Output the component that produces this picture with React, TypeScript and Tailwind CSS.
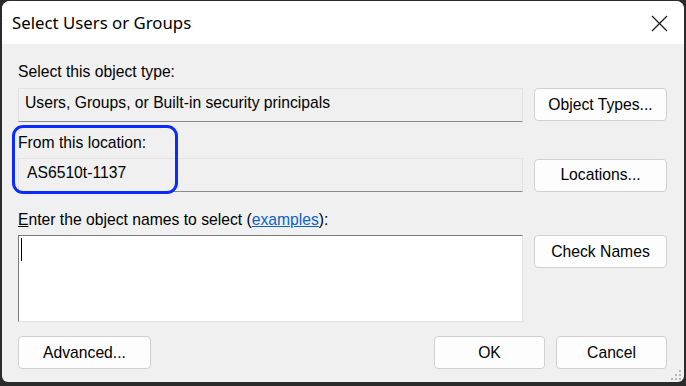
import React from "react";

const ui = { fontFamily: '"Liberation Sans", Arial, sans-serif' };
const title = { fontFamily: '"Noto Sans", "Open Sans", sans-serif' };

function WinButton({ label, className = "" }: { label: string; className?: string }) {
  return (
    <button
      className={`h-[33px] rounded-[4px] border border-[#d0d0d0] bg-[#fdfdfd] text-[15.7px] text-black ${className}`}
      style={ui}
    >
      {label}
    </button>
  );
}

function ReadOnlyField({ value, pad = "pl-[6px]" }: { value: string; pad?: string }) {
  return (
    <div className={`h-[34px] flex items-center pb-[4px] border border-[#e3e3e3] border-b-[#8a8a8a] bg-[#f0f0f0] text-[15.7px] text-black ${pad}`}>
      {value}
    </div>
  );
}

export default function App() {
  return (
    <div className="w-[686px] h-[386px] bg-[#2b2b2b] pt-px pl-[2px] pr-[2px] pb-[4px]" style={ui}>
      <div className="relative h-full rounded-t-[8px] rounded-b-[6px] overflow-hidden flex flex-col bg-[#f0f0f0]">
        {/* title bar */}
        <div className="h-[43px] shrink-0 bg-white flex items-center justify-between pl-[10px] pr-[16px]">
          <span className="text-[16.8px] text-black" style={title}>Select Users or Groups</span>
          <svg width="17" height="17" viewBox="0 0 17 17" className="mt-[1px]">
            <path d="M1 1 L16 16 M16 1 L1 16" stroke="#1a1a1a" strokeWidth="1.3" fill="none" />
          </svg>
        </div>

        {/* body */}
        <div className="flex-1 pl-[16px] pr-[17px] pt-[17px]">
          <div className="text-[15.7px] leading-[22px] text-black">Select this object type:</div>
          <div className="mt-[5px] grid grid-cols-[505px_133px] gap-x-[11px] items-start">
            <ReadOnlyField value="Users, Groups, or Built-in security principals" />
            <WinButton label="Object Types..." />
          </div>

          <div className="mt-[10px] text-[15.7px] leading-[22px] text-black">From this location:</div>
          <div className="mt-[4px] grid grid-cols-[505px_133px] gap-x-[11px] items-center">
            <ReadOnlyField value="AS6510t-1137" pad="pl-[8px]" />
            <WinButton label="Locations..." />
          </div>

          <div className="mt-[17px] text-[15.7px] leading-[22px] text-black">
            <span className="underline">E</span>nter the object names to select (
            <span className="text-[#0b62c4] underline">examples</span>):
          </div>
          <div className="mt-[4px] grid grid-cols-[505px_133px] gap-x-[11px] items-start">
            <div className="h-[87px] bg-white border border-[#e3e3e3] border-t-[#7a7a7a] border-l-[#7a7a7a] pl-[2px] pt-[2px]">
              <div className="w-px h-[23px] bg-black" />
            </div>
            <WinButton label="Check Names" />
          </div>

          <div className="mt-[14px] flex items-center">
            <WinButton label="Advanced..." className="w-[133px]" />
            <div className="flex-1" />
            <WinButton label="OK" className="w-[111px]" />
            <WinButton label="Cancel" className="w-[111px] ml-[11px]" />
          </div>
        </div>

        {/* size grip */}
        <div className="absolute right-[3px] bottom-[2px] grid grid-cols-3 gap-[2px]">
          <span className="w-[2px] h-[2px]" />
          <span className="w-[2px] h-[2px]" />
          <span className="w-[2px] h-[2px] bg-[#b8b8b8]" />
          <span className="w-[2px] h-[2px]" />
          <span className="w-[2px] h-[2px] bg-[#b8b8b8]" />
          <span className="w-[2px] h-[2px] bg-[#b8b8b8]" />
          <span className="w-[2px] h-[2px] bg-[#b8b8b8]" />
          <span className="w-[2px] h-[2px] bg-[#b8b8b8]" />
          <span className="w-[2px] h-[2px] bg-[#b8b8b8]" />
        </div>

        {/* annotation highlight */}
        <div className="absolute left-[10px] top-[124px] w-[166px] h-[69px] rounded-[11px] border-[3px] border-[#0a2bff]" />
      </div>
    </div>
  );
}
